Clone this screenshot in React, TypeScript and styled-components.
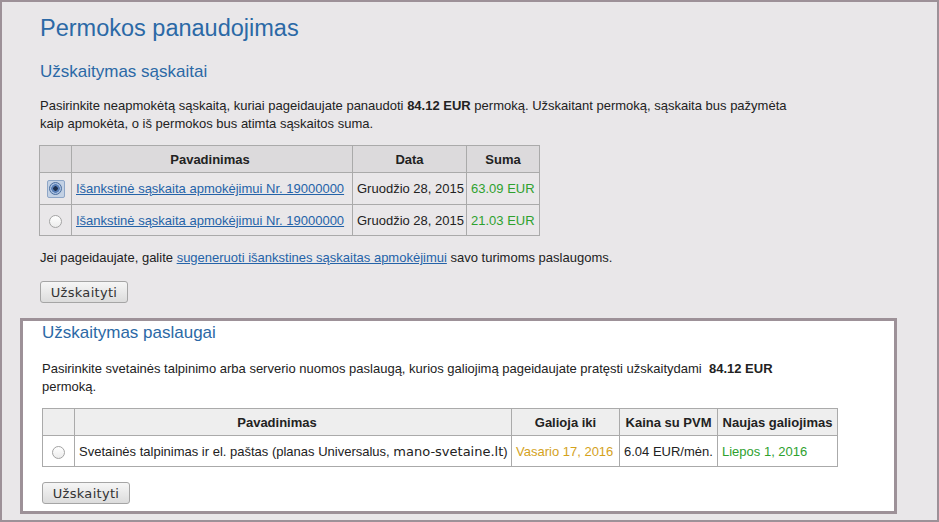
import React from "react";
import styled, { createGlobalStyle } from "styled-components";

const GlobalStyle = createGlobalStyle`
  html, body {
    margin: 0;
    padding: 0;
    background: #e9e7e9;
  }
  body {
    font-family: "Liberation Sans", Arial, sans-serif;
    font-size: 13px;
    color: #222;
  }
`;

const Frame = styled.div`
  box-sizing: border-box;
  width: 939px;
  height: 522px;
  border: 2px solid #9d9198;
  background: #e9e7e9;
  display: flex;
  flex-direction: column;
`;

const Section = styled.div`
  padding: 12px 0 0 38px;
`;

const Title = styled.h1`
  margin: 0;
  font-size: 23.5px;
  line-height: 28px;
  font-weight: normal;
  color: #2b69a6;
`;

const SubTitle = styled.h2<{ $top?: number }>`
  margin: ${(p) => p.$top ?? 0}px 0 0;
  font-size: 17px;
  line-height: 22px;
  font-weight: normal;
  color: #2b69a6;
`;

const Para = styled.p<{ $top: number }>`
  margin: ${(p) => p.$top}px 0 0;
  max-width: 765px;
  line-height: 18px;
`;

const Link = styled.a`
  color: #2563a8;
  text-decoration: underline;
  cursor: pointer;
`;

const Table = styled.table<{
  $top: number;
  $head: string;
  $width: number;
  $shift: number;
}>`
  margin-top: ${(p) => p.$top}px;
  margin-left: ${(p) => p.$shift}px;
  width: ${(p) => p.$width}px;
  border-collapse: collapse;
  table-layout: fixed;
  th {
    background: ${(p) => p.$head};
    font-weight: bold;
    height: 26px;
    padding: 0 4px;
    text-align: center;
    border: 1px solid #aaa;
    white-space: nowrap;
  }
  td {
    padding: 0 4px;
    border: 1px solid #aaa;
    white-space: nowrap;
  }
`;

const NameHead = styled.th<{ $right: number }>`
  && {
    padding-right: ${(p) => p.$right}px;
  }
`;

const Row = styled.tr<{ $h: number }>`
  td {
    height: ${(p) => p.$h}px;
  }
`;

const RadioCell = styled.td`
  text-align: center;
  && {
    padding: 0;
  }
`;

const Focus = styled.span`
  display: inline-flex;
  align-items: center;
  justify-content: center;
  width: 16px;
  height: 16px;
  border: 1px solid #8ea6c7;
  border-radius: 2px;
  background: #c3d1e4;
  vertical-align: middle;
`;

const Radio = styled.span<{ $checked?: boolean }>`
  display: inline-block;
  box-sizing: border-box;
  width: 13px;
  height: 13px;
  border-radius: 50%;
  vertical-align: middle;
  border: 1px solid ${(p) => (p.$checked ? "#4d6f9e" : "#a3a3a3")};
  background: ${(p) =>
    p.$checked
      ? "radial-gradient(circle, #1d2f4c 0 2px, #5a7fb6 2.5px 4px, #a9c0e0 4.5px)"
      : "linear-gradient(#ffffff, #ececec)"};
`;

const Green = styled.span`
  color: #2ea12e;
`;

const Amber = styled.span`
  color: #d4a21c;
`;

const Domain = styled.span`
  font-family: "DejaVu Sans", sans-serif;
  font-size: 13px;
`;

const Button = styled.button<{ $top: number }>`
  display: block;
  margin-top: ${(p) => p.$top}px;
  box-sizing: border-box;
  width: 88px;
  height: 22px;
  padding: 0;
  font-family: "DejaVu Sans", sans-serif;
  font-size: 13px;
  color: #333;
  letter-spacing: 0.3px;
  border: 1px solid #a5a5a5;
  border-radius: 3px;
  background: linear-gradient(#f6f6f6, #dcdcdc);
`;

const Box = styled.div`
  margin: 15px 40px 6px 18px;
  border: 3px solid #9d9198;
  background: #fff;
  padding: 1px 0 6px 19px;
  flex: 1;
`;

const invoices = [
  { amount: "63.09 EUR", checked: true, h: 31 },
  { amount: "21.03 EUR", checked: false, h: 30 },
];

export default function App() {
  return (
    <>
      <GlobalStyle />
      <Frame>
        <Section>
          <Title>Permokos panaudojimas</Title>
          <SubTitle $top={19}>Užskaitymas sąskaitai</SubTitle>
          <Para $top={14}>
            Pasirinkite neapmokėtą sąskaitą, kuriai pageidaujate panaudoti{" "}
            <b>84.12 EUR</b> permoką. Užskaitant permoką, sąskaita bus
            pažymėta kaip apmokėta, o iš permokos bus atimta sąskaitos suma.
          </Para>
          <Table $top={12} $head="#dcdadc" $width={501} $shift={-1}>
            <colgroup>
              <col style={{ width: 32 }} />
              <col style={{ width: 281 }} />
              <col style={{ width: 114 }} />
              <col style={{ width: 73 }} />
            </colgroup>
            <thead>
              <tr>
                <th></th>
                <NameHead $right={8}>Pavadinimas</NameHead>
                <th>Data</th>
                <th>Suma</th>
              </tr>
            </thead>
            <tbody>
              {invoices.map((inv) => (
                <Row $h={inv.h} key={inv.amount}>
                  <RadioCell>
                    {inv.checked ? (
                      <Focus>
                        <Radio $checked />
                      </Focus>
                    ) : (
                      <Radio />
                    )}
                  </RadioCell>
                  <td>
                    <Link>Išankstinė sąskaita apmokėjimui Nr. 19000000</Link>
                  </td>
                  <td>Gruodžio 28, 2015</td>
                  <td>
                    <Green>{inv.amount}</Green>
                  </td>
                </Row>
              ))}
            </tbody>
          </Table>
          <Para $top={13}>
            Jei pageidaujate, galite{" "}
            <Link>sugeneruoti išankstines sąskaitas apmokėjimui</Link> savo
            turimoms paslaugoms.
          </Para>
          <Button $top={14}>Užskaityti</Button>
        </Section>
        <Box>
          <SubTitle>Užskaitymas paslaugai</SubTitle>
          <Para $top={16}>
            Pasirinkite svetainės talpinimo arba serverio nuomos paslaugą,
            kurios galiojimą pageidaujate pratęsti užskaitydami&nbsp;{" "}
            <b>84.12 EUR</b> permoką.
          </Para>
          <Table $top={12} $head="#eeeeee" $width={795} $shift={0}>
            <colgroup>
              <col style={{ width: 32 }} />
              <col style={{ width: 437 }} />
              <col style={{ width: 108 }} />
              <col style={{ width: 98 }} />
              <col style={{ width: 120 }} />
            </colgroup>
            <thead>
              <tr>
                <th></th>
                <NameHead $right={36}>Pavadinimas</NameHead>
                <th>Galioja iki</th>
                <th>Kaina su PVM</th>
                <th>Naujas galiojimas</th>
              </tr>
            </thead>
            <tbody>
              <Row $h={30}>
                <RadioCell>
                  <Radio />
                </RadioCell>
                <td>
                  Svetainės talpinimas ir el. paštas (planas Universalus,{" "}
                  <Domain>mano-svetaine.lt</Domain>)
                </td>
                <td>
                  <Amber>Vasario 17, 2016</Amber>
                </td>
                <td>6.04 EUR/mėn.</td>
                <td>
                  <Green>Liepos 1, 2016</Green>
                </td>
              </Row>
            </tbody>
          </Table>
          <Button $top={15}>Užskaityti</Button>
        </Box>
      </Frame>
    </>
  );
}
